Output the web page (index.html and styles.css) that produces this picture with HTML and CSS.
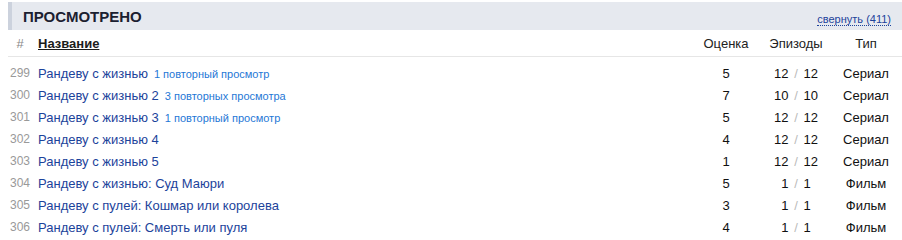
FILE: index.html
```html
<!DOCTYPE html>
<html lang="ru">
<head>
<meta charset="utf-8">
<link rel="stylesheet" href="styles.css">
</head>
<body>
<div class="list">
  <div class="list-head">
    <h2 class="list-title">ПРОСМОТРЕНО</h2>
    <a class="toggle" href="#">свернуть (411)</a>
  </div>
  <div class="row row-head">
    <div class="c-num">#</div>
    <div class="c-title"><a class="sort" href="#">Название</a></div>
    <div class="c-score">Оценка</div>
    <div class="c-eps">Эпизоды</div>
    <div class="c-type">Тип</div>
  </div>
  <div class="row">
    <div class="c-num">299</div>
    <div class="c-title"><a class="name" href="#">Рандеву с жизнью</a><span class="rewatch">1 повторный просмотр</span></div>
    <div class="c-score">5</div>
    <div class="c-eps">12 <span class="sep">/</span> 12</div>
    <div class="c-type">Сериал</div>
  </div>
  <div class="row">
    <div class="c-num">300</div>
    <div class="c-title"><a class="name" href="#">Рандеву с жизнью 2</a><span class="rewatch">3 повторных просмотра</span></div>
    <div class="c-score">7</div>
    <div class="c-eps">10 <span class="sep">/</span> 10</div>
    <div class="c-type">Сериал</div>
  </div>
  <div class="row">
    <div class="c-num">301</div>
    <div class="c-title"><a class="name" href="#">Рандеву с жизнью 3</a><span class="rewatch">1 повторный просмотр</span></div>
    <div class="c-score">5</div>
    <div class="c-eps">12 <span class="sep">/</span> 12</div>
    <div class="c-type">Сериал</div>
  </div>
  <div class="row">
    <div class="c-num">302</div>
    <div class="c-title"><a class="name" href="#">Рандеву с жизнью 4</a></div>
    <div class="c-score">4</div>
    <div class="c-eps">12 <span class="sep">/</span> 12</div>
    <div class="c-type">Сериал</div>
  </div>
  <div class="row">
    <div class="c-num">303</div>
    <div class="c-title"><a class="name" href="#">Рандеву с жизнью 5</a></div>
    <div class="c-score">1</div>
    <div class="c-eps">12 <span class="sep">/</span> 12</div>
    <div class="c-type">Сериал</div>
  </div>
  <div class="row">
    <div class="c-num">304</div>
    <div class="c-title"><a class="name" href="#">Рандеву с жизнью: Суд Маюри</a></div>
    <div class="c-score">5</div>
    <div class="c-eps">1 <span class="sep">/</span> 1</div>
    <div class="c-type">Фильм</div>
  </div>
  <div class="row">
    <div class="c-num">305</div>
    <div class="c-title"><a class="name" href="#">Рандеву с пулей: Кошмар или королева</a></div>
    <div class="c-score">3</div>
    <div class="c-eps">1 <span class="sep">/</span> 1</div>
    <div class="c-type">Фильм</div>
  </div>
  <div class="row">
    <div class="c-num">306</div>
    <div class="c-title"><a class="name" href="#">Рандеву с пулей: Смерть или пуля</a></div>
    <div class="c-score">4</div>
    <div class="c-eps">1 <span class="sep">/</span> 1</div>
    <div class="c-type">Фильм</div>
  </div>
</div>
</body>
</html>
```
FILE: styles.css
```css
html, body {
  margin: 0;
  padding: 0;
  background: #fff;
}
body {
  padding: 2px 0 0 8px;
  font-family: "Liberation Sans", Arial, sans-serif;
  font-size: 13px;
  color: #111;
}
.list {
  width: 894px;
}
.list-head {
  display: flex;
  align-items: center;
  justify-content: space-between;
  height: 28px;
  background: #e6e9ef;
  border-left: 4px solid #ccd2dd;
  padding: 0 11px 0 11px;
}
.list-title {
  margin: 0;
  font-size: 15px;
  font-weight: bold;
  color: #1b2030;
  line-height: 28px;
  padding-top: 1px;
}
.toggle {
  font-size: 11px;
  color: #1d439b;
  text-decoration: none;
  border-bottom: 1px dotted #1d439b;
  line-height: 12px;
  margin-top: 6px;
}
.row {
  display: grid;
  grid-template-columns: 24px 1fr 60px 80px 60px;
  padding-right: 6px;
  height: 22px;
  align-items: center;
  white-space: nowrap;
}
.row-head {
  height: 26px;
  border-bottom: 1px solid #e6e6e6;
  margin-bottom: 5px;
  color: #222;
}
.c-num {
  text-align: center;
  color: #999;
  font-size: 12px;
}
.row-head .c-num {
  font-size: 13px;
  color: #888;
}
.c-title {
  padding-left: 6px;
}
.sort {
  color: #1c1c1c;
  font-weight: bold;
  text-decoration: underline;
}
.name {
  color: #1c439b;
  text-decoration: none;
}
.rewatch {
  margin-left: 6px;
  font-size: 11px;
  color: #1f78d6;
}
.c-score, .c-eps, .c-type {
  text-align: center;
}
.sep {
  color: #bbb;
  padding: 0 2px;
}
```
